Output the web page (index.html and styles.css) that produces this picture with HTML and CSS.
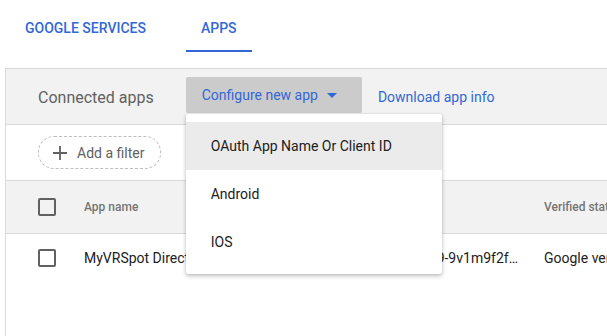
FILE: index.html
```html
<!DOCTYPE html>
<html>
<head>
    <meta charset="UTF-8">
    <title>Apps</title>
    <link rel="stylesheet" href="styles.css">
</head>
<body>
    <div class="tabs">
        <div class="tab">GOOGLE SERVICES</div>
        <div class="tab active">APPS</div>
    </div>
    <div class="card">
        <div class="card-head">
            <span class="title">Connected apps</span>
            <div class="menu-wrap">
                <div class="btn-config">
                    <span>Configure new app</span>
                    <svg class="caret" width="24" height="24" viewBox="0 0 24 24"><path d="M7 10l5 5 5-5z" fill="#3367d6"/></svg>
                </div>
                <ul class="menu">
                    <li class="hover">OAuth App Name Or Client ID</li>
                    <li>Android</li>
                    <li>IOS</li>
                </ul>
            </div>
            <a class="link" href="#">Download app info</a>
        </div>
        <div class="filter-row">
            <div class="filter">
                <svg width="16" height="16" viewBox="0 0 16 16"><path d="M8 1v14M1 8h14" stroke="#616161" stroke-width="1.8" fill="none"/></svg>
                <span>Add a filter</span>
            </div>
        </div>
        <div class="row head">
            <div class="c-cb"><span class="cb"></span></div>
            <div class="c-name">App name</div>
            <div class="c-type">Type</div>
            <div class="c-id"><span>ID</span></div>
            <div class="c-ver">Verified status</div>
        </div>
        <div class="row">
            <div class="c-cb"><span class="cb"></span></div>
            <div class="c-name">MyVRSpot Directory Sync</div>
            <div class="c-type">Web application</div>
            <div class="c-id end"><span>250963-9-9v1m9f2f…</span></div>
            <div class="c-ver">Google verified</div>
        </div>
    </div>
</body>
</html>
```

FILE: styles.css
```css
html, body{
    margin: 0;
    height: 100%;
    overflow: hidden;
}
body{
    font-family: Roboto, "Noto Sans", sans-serif;
    color: #212121;
    background: #ffffff;
}
ul, li{margin: 0; padding: 0; list-style: none;}
a{text-decoration: none; color: inherit;}

.tabs{
    display: flex;
    gap: 25px;
    height: 52px;
    padding-left: 10px;
}
.tab{
    display: flex;
    align-items: center;
    padding: 6px 15px 0;
    font-size: 14px;
    font-weight: 500;
    color: #3367d6;
    box-sizing: border-box;
    border-bottom: 2px solid transparent;
}
.tab.active{
    border-bottom-color: #3367d6;
}

.card{
    margin: 16px 0 0 5px;
    width: 1000px;
    height: 400px;
    border: 1px solid #dadada;
    border-right: none;
}

.card-head{
    display: flex;
    align-items: center;
    height: 52px;
    padding: 0 0 3px 32px;
    background: #f2f2f2;
    border-bottom: 1px solid #dadada;
}
.title{
    font-size: 16px;
    color: #616161;
    margin-right: 32px;
    padding-top: 4px;
}
.menu-wrap{
    position: relative;
}
.btn-config{
    display: flex;
    align-items: center;
    height: 36px;
    padding: 0 18px 0 16px;
    background: #cbcbcb;
    border-radius: 2px;
    font-size: 14px;
    color: #3367d6;
}
.caret{
    margin-left: 2px;
}
.link{
    margin-left: 16px;
    font-size: 14px;
    color: #3367d6;
    padding-top: 4px;
}
.menu{
    position: absolute;
    top: 37px;
    left: 0;
    width: 256px;
    padding: 8px 0;
    background: #ffffff;
    border-radius: 2px;
    box-shadow: 0 2px 4px rgba(0, 0, 0, .25), 0 0 2px rgba(0, 0, 0, .1);
    z-index: 2;
}
.menu li{
    height: 48px;
    line-height: 48px;
    padding-left: 25px;
    font-size: 14px;
    color: #212121;
}
.menu li.hover{
    background: #ebebeb;
}

.filter-row{
    display: flex;
    align-items: center;
    height: 55px;
    padding-left: 32px;
    border-bottom: 1px solid #dadada;
}
.filter{
    display: flex;
    align-items: center;
    gap: 9px;
    height: 31px;
    padding: 0 16px 0 13px;
    border: 1px dashed #bdbdbd;
    border-radius: 16px;
    font-size: 14px;
    color: #616161;
}

.row{
    display: flex;
    align-items: center;
    height: 48px;
    padding-left: 32px;
    font-size: 14px;
    color: #212121;
    white-space: nowrap;
}
.row.head{
    height: 52px;
    background: #f2f2f2;
    border-bottom: 1px solid #dadada;
    font-size: 12px;
    font-weight: 500;
    color: #757575;
}
.c-cb{
    width: 46px;
    display: flex;
    align-items: center;
}
.cb{
    width: 18px;
    height: 18px;
    box-sizing: border-box;
    border: 2px solid #616161;
    border-radius: 2px;
}
.c-name{
    width: 160px;
    overflow: hidden;
}
.c-type{
    width: 120px;
    overflow: hidden;
}
.c-id{
    display: flex;
    width: 154px;
    margin-right: 26px;
    overflow: hidden;
}
.c-id.end{
    justify-content: flex-end;
}
.c-id span{
    flex-shrink: 0;
}
.c-ver{
    flex: 1;
}
```
